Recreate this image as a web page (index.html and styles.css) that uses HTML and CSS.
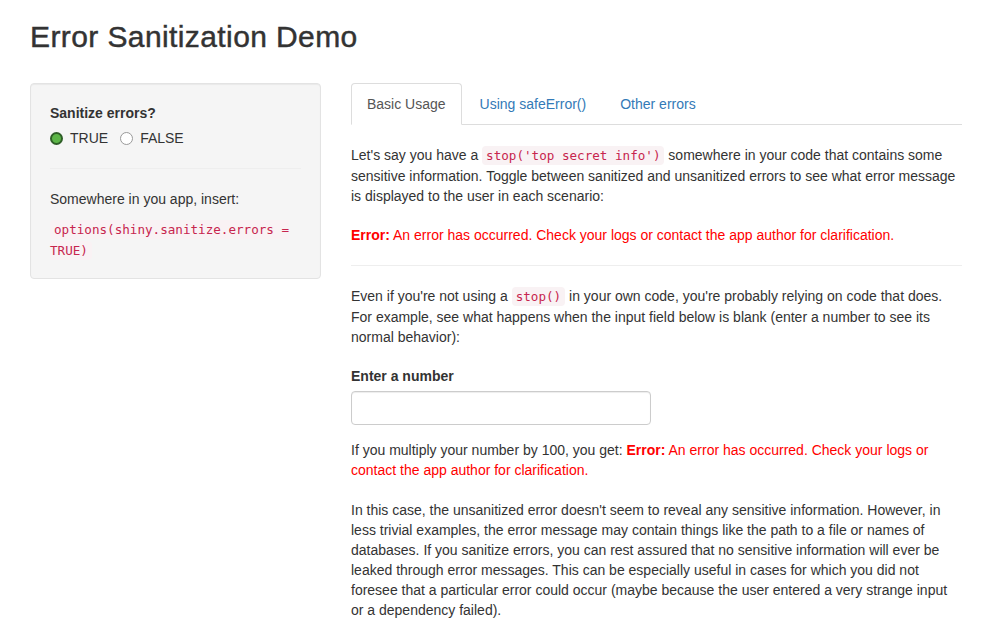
FILE: index.html
```html
<!DOCTYPE html>
<html>
<head>
<meta charset="utf-8">
<title>Error Sanitization Demo</title>
<link rel="stylesheet" href="styles.css">
</head>
<body>
<div class="page">
  <h2 class="title">Error Sanitization Demo</h2>
  <div class="layout">
    <div class="col">
      <div class="well">
        <div class="form-group">
          <label class="control-label">Sanitize errors?</label>
          <div class="radios">
            <label class="radio-inline"><input type="radio" name="sanitize" checked><span>TRUE</span></label>
            <label class="radio-inline"><input type="radio" name="sanitize"><span>FALSE</span></label>
          </div>
        </div>
        <hr class="rule">
        <p class="para">Somewhere in you app, insert:</p>
        <p class="code-para"><code class="code">options(shiny.sanitize.errors = TRUE)</code></p>
      </div>
    </div>
    <div class="col">
      <ul class="tabs">
        <li class="tab active"><a>Basic Usage</a></li>
        <li class="tab"><a>Using safeError()</a></li>
        <li class="tab"><a>Other errors</a></li>
      </ul>
      <div class="tab-content">
        <p class="para text">Let's say you have a <code class="code">stop('top secret info')</code> somewhere in your code that contains some sensitive information. Toggle between sanitized and unsanitized errors to see what error message is displayed to the user in each scenario:</p>
        <div class="error"><b>Error:</b> An error has occurred. Check your logs or contact the app author for clarification.</div>
        <hr class="rule">
        <p class="para text">Even if you're not using a <code class="code">stop()</code> in your own code, you're probably relying on code that does. For example, see what happens when the input field below is blank (enter a number to see its normal behavior):</p>
        <div class="form-group number-group">
          <label class="control-label">Enter a number</label>
          <input class="form-control" type="number">
        </div>
        <p class="para text result">If you multiply your number by 100, you get: <span class="error-inline"><b>Error:</b> An error has occurred. Check your logs or contact the app author for clarification.</span></p>
        <p class="para text">In this case, the unsanitized error doesn't seem to reveal any sensitive information. However, in less trivial examples, the error message may contain things like the path to a file or names of databases. If you sanitize errors, you can rest assured that no sensitive information will ever be leaked through error messages. This can be especially useful in cases for which you did not foresee that a particular error could occur (maybe because the user entered a very strange input or a dependency failed).</p>
      </div>
    </div>
  </div>
</div>
</body>
</html>
```

FILE: styles.css
```css
* { box-sizing: border-box; }
html, body { margin: 0; padding: 0; background: #fff; }
body {
  font-family: "Liberation Sans", Arial, Helvetica, sans-serif;
  font-size: 14px;
  line-height: 20px;
  color: #333;
}
.page { padding: 0 15px; }
.title {
  font-size: 30px;
  font-weight: 400;
  line-height: 33px;
  margin: 20px 0 30px;
  padding-left: 15px;
  color: #333;
  letter-spacing: 0.4px;
  -webkit-text-stroke: 0.45px #333;
}
.layout {
  display: grid;
  grid-template-columns: 321px 641px;
}
.col { padding: 0 15px; }
.well {
  background: #f5f5f5;
  border: 1px solid #e3e3e3;
  border-radius: 4px;
  box-shadow: inset 0 1px 1px rgba(0,0,0,.05);
  padding: 19px 19px 17px;
}
.control-label {
  display: block;
  font-weight: 700;
  margin-bottom: 5px;
}
.radios { display: flex; gap: 12px; }
.radio-inline {
  display: flex;
  align-items: center;
  gap: 7px;
  cursor: pointer;
}
.radio-inline input {
  -webkit-appearance: none;
  appearance: none;
  width: 13px;
  height: 13px;
  margin: 0;
  border-radius: 50%;
  border: 1px solid #9a9a9a;
  background: #fff;
}
.radio-inline input:checked {
  background: #5cb547;
  border: 2px solid #2e5e27;
}
.rule {
  border: 0;
  border-top: 1px solid #eee;
  margin: 20px 0;
}
.para { margin: 0 0 10px; }
.code-para { margin: 0; }
.code {
  font-family: "DejaVu Sans Mono", "Liberation Mono", monospace;
  font-size: 12.6px;
  color: #c7254e;
  background: #f9f2f4;
  padding: 2px 4px;
  border-radius: 4px;
}
.tabs {
  list-style: none;
  margin: 0;
  padding: 0;
  display: flex;
  border-bottom: 1px solid #ddd;
}
.tab { margin-right: 2px; margin-bottom: -1px; }
.tab a {
  display: block;
  padding: 10px 15px;
  line-height: 20px;
  border: 1px solid transparent;
  border-radius: 4px 4px 0 0;
  color: #337ab7;
}
.tab.active a {
  color: #555;
  background: #fff;
  border-color: #ddd #ddd transparent;
}
.tab-content { padding-top: 20px; }
.text { margin-bottom: 19px; }
.error, .error-inline { color: #ff0000; }
.error b, .error-inline b { font-weight: 700; }
.number-group { margin: 0 0 15px; }
.number-group .control-label { margin-bottom: 5px; }
.form-control {
  display: block;
  width: 300px;
  height: 34px;
  padding: 6px 12px;
  font: inherit;
  color: #555;
  background: #fff;
  border: 1px solid #ccc;
  border-radius: 4px;
  box-shadow: inset 0 1px 1px rgba(0,0,0,.075);
}
.result { margin-bottom: 20px; }
```
